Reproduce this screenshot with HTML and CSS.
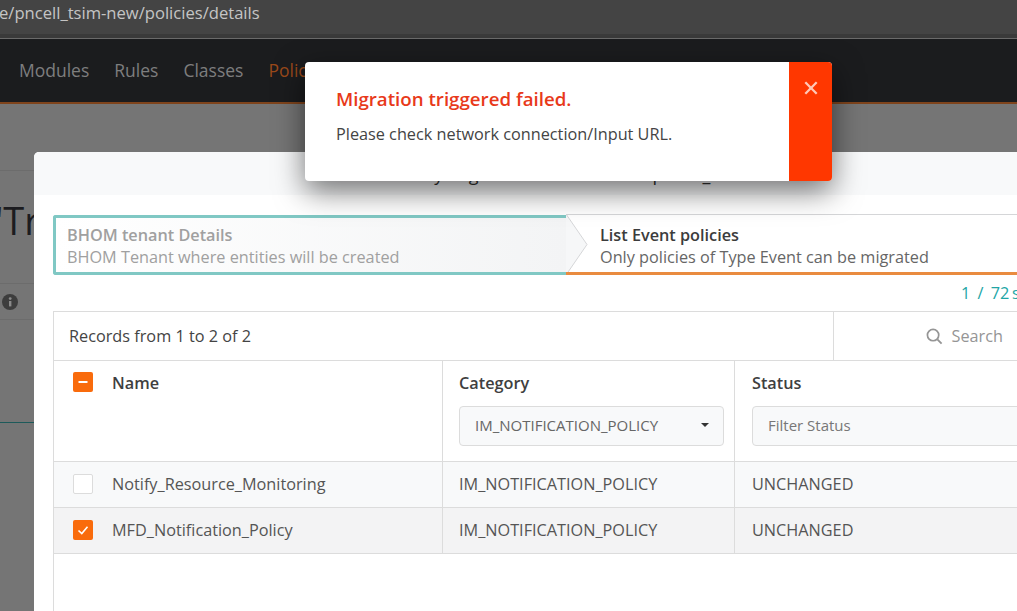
FILE: index.html
```html
<!DOCTYPE html>
<html lang="en">
<head>
    <meta charset="UTF-8">
    <title>Policy details</title>
    <link rel="stylesheet" href="styles.css">
</head>
<body>
    <!-- Browser address bar -->
    <div class="address-bar">
        <span class="address-text">e/pncell_tsim-new/policies/details</span>
    </div>

    <!-- Top navigation, dimmed by the modal backdrop -->
    <nav class="top-nav">
        <a class="nav-link">Modules</a>
        <a class="nav-link">Rules</a>
        <a class="nav-link">Classes</a>
        <a class="nav-link active">Policies</a>
    </nav>

    <!-- Page behind the modal -->
    <main class="page">
        <div class="page-title">'Tr</div>
        <div class="page-info">
            <svg class="info-icon" viewBox="0 0 16 16">
                <circle cx="8" cy="8" r="8" fill="#3d3d3d"/>
                <rect x="7" y="7" width="2.4" height="5.4" fill="#8a8a8a"/>
                <circle cx="8.2" cy="4.6" r="1.4" fill="#8a8a8a"/>
            </svg>
        </div>
        <div class="page-rule"></div>
    </main>

    <!-- Migration modal -->
    <section class="modal">
        <header class="modal-header">Policy Migrations to BHOM for pncell_tsim</header>
        <div class="modal-body">
            <div class="steps">
                <div class="step step-done">
                    <div class="step-title">BHOM tenant Details</div>
                    <div class="step-text">BHOM Tenant where entities will be created</div>
                    <svg class="step-arrow" viewBox="0 0 22 61">
                        <polygon points="0,0 21,30.5 0,61" fill="#f6f7f8"/>
                        <polyline points="0,0 21,30.5 0,61" fill="none" stroke="#d5d6d8"/>
                    </svg>
                </div>
                <div class="step step-current">
                    <div class="step-title">List Event policies</div>
                    <div class="step-text">Only policies of Type Event can be migrated</div>
                </div>
            </div>

            <div class="pager">1 / 72&thinsp;s</div>

            <div class="grid">
                <div class="grid-toolbar">
                    <div class="records">Records from 1 to 2 of 2</div>
                    <div class="search">
                        <svg class="search-icon" viewBox="0 0 18 18">
                            <circle cx="7.5" cy="7.5" r="6" fill="none" stroke="#959595" stroke-width="1.8"/>
                            <line x1="12" y1="12" x2="16.5" y2="16.5" stroke="#959595" stroke-width="2"/>
                        </svg>
                        <span>Search</span>
                    </div>
                </div>

                <div class="grid-row grid-head">
                    <div class="cell cell-name">
                        <span class="check check-on">
                            <svg viewBox="0 0 20 20"><line x1="5.5" y1="10" x2="14.5" y2="10" stroke="#fff" stroke-width="2"/></svg>
                        </span>
                        <span class="head-label">Name</span>
                    </div>
                    <div class="cell cell-category">
                        <span class="head-label">Category</span>
                        <div class="filter filter-select">
                            <span>IM_NOTIFICATION_POLICY</span>
                            <span class="caret"></span>
                        </div>
                    </div>
                    <div class="cell cell-status">
                        <span class="head-label">Status</span>
                        <div class="filter filter-wide">Filter Status</div>
                    </div>
                </div>

                <div class="grid-row row-plain">
                    <div class="cell cell-name">
                        <span class="check"></span>
                        <span>Notify_Resource_Monitoring</span>
                    </div>
                    <div class="cell cell-category">IM_NOTIFICATION_POLICY</div>
                    <div class="cell cell-status">UNCHANGED</div>
                </div>

                <div class="grid-row row-selected">
                    <div class="cell cell-name">
                        <span class="check check-on">
                            <svg viewBox="0 0 20 20"><polyline points="5.5,10.5 8.8,13.6 14.5,6.8" fill="none" stroke="#fff" stroke-width="1.6"/></svg>
                        </span>
                        <span>MFD_Notification_Policy</span>
                    </div>
                    <div class="cell cell-category">IM_NOTIFICATION_POLICY</div>
                    <div class="cell cell-status">UNCHANGED</div>
                </div>
            </div>
        </div>
    </section>

    <!-- Error toast -->
    <div class="toast">
        <div class="toast-body">
            <div class="toast-title">Migration triggered failed.</div>
            <div class="toast-text">Please check network connection/Input URL.</div>
        </div>
        <div class="toast-close">
            <svg viewBox="0 0 16 16">
                <line x1="1.5" y1="1.5" x2="14.5" y2="14.5" stroke="#ffc9b8" stroke-width="2.6"/>
                <line x1="14.5" y1="1.5" x2="1.5" y2="14.5" stroke="#ffc9b8" stroke-width="2.6"/>
            </svg>
        </div>
    </div>
</body>
</html>
```

FILE: styles.css
```css
/* Page layout */
html, body {
    height: 100%;
}

body {
    margin: 0;
    overflow: hidden;
    font-family: "Open Sans", Arial, sans-serif;
    font-size: 16.25px;
    color: #444;
    background-color: #757575;
}

/* Browser address bar */
.address-bar {
    height: 34px;
    background-color: #444;
    border-bottom: 4px solid #3a3a3a;
    overflow: hidden;
}

.address-text {
    font-size: 16.6px;
    line-height: 26px;
    color: #c4c4c4;
    margin-left: -1px;
}

/* Top navigation */
.top-nav {
    height: 62px;
    padding-bottom: 1px;
    border-top: 1px solid #6a6a6a;
    border-bottom: 2px solid #7f441c;
    background-color: #1b1c1e;
    display: flex;
    align-items: center;
    gap: 25px;
    padding-left: 19px;
}

.nav-link {
    font-size: 17.5px;
    color: #7e7e7e;
}

.nav-link.active {
    color: #99491a;
}

/* Page behind the modal */
.page {
    margin-top: 66px;
    border-top: 1px solid #6c6c6c;
    width: 34px;
    overflow: hidden;
}

.page-title {
    height: 112px;
    font-size: 38px;
    line-height: 98px;
    color: #1c1c20;
    white-space: nowrap;
    margin-left: -5px;
}

.page-info {
    height: 35px;
    border-top: 1px solid #6c6c6c;
    border-bottom: 1px solid #6c6c6c;
    display: flex;
    align-items: center;
    padding-left: 2px;
}

.info-icon {
    width: 16px;
    height: 16px;
}

.page-rule {
    margin-top: 102px;
    height: 1px;
    background-color: #1d5a5a;
}

/* Migration modal */
.modal {
    position: absolute;
    left: 34px;
    top: 152px;
    right: 0;
    bottom: 0;
    overflow: hidden;
    background-color: #fff;
    border-top-left-radius: 5px;
}

.modal-header {
    height: 43px;
    line-height: 44px;
    padding-left: 361px;
    font-size: 18px;
    background-color: #f8f9fa;
    color: #333;
    white-space: nowrap;
    overflow: hidden;
}

.modal-body {
    padding: 19px 0 0 19px;
}

/* Wizard steps */
.steps {
    display: flex;
    height: 61px;
}

.step {
    position: relative;
    box-sizing: border-box;
    padding-top: 9px;
    line-height: 22px;
}

.step-title {
    font-weight: 600;
}

.step-done {
    width: 513px;
    margin-top: 1px;
    padding-left: 11px;
    border: 3px solid #80c8c4;
    border-right: none;
    border-radius: 3px 0 0 3px;
    padding-top: 6px;
    background: linear-gradient(to right, #fff, #f3f4f5);
    color: #a0a0a0;
}

.step-arrow {
    position: absolute;
    left: 510px;
    top: -4px;
    width: 22px;
    height: 61px;
}

.step-current {
    flex: 1;
    padding-left: 34px;
    border-top: 1px solid #d5d6d8;
    border-bottom: 3px solid #e98b3f;
    color: #666;
}

.step-current .step-title {
    color: #3c3c3c;
}

/* Selection counter */
.pager {
    height: 36px;
    line-height: 36px;
    color: #21a5a5;
    white-space: nowrap;
    padding-left: 908px;
    word-spacing: 3px;
    overflow: hidden;
}

/* Policies grid */
.grid {
    height: 320px;
    border: 1px solid #dcdcdc;
    border-right: none;
}

.grid-toolbar {
    display: flex;
    height: 48px;
    border-bottom: 1px solid #dcdcdc;
}

.records {
    width: 764px;
    padding-left: 15px;
    line-height: 48px;
    border-right: 1px solid #dcdcdc;
}

.search {
    flex: 1;
    display: flex;
    align-items: center;
    justify-content: flex-end;
    gap: 9px;
    padding-right: 14px;
    color: #959595;
}

.search-icon {
    width: 17px;
    height: 17px;
}

.grid-row {
    display: flex;
    border-bottom: 1px solid #dcdcdc;
}

.row-plain {
    background-color: #f8f9fa;
}

.row-selected {
    background-color: #f3f3f4;
}

.cell {
    box-sizing: border-box;
    height: 45px;
    padding-bottom: 2px;
    display: flex;
    align-items: center;
    border-right: 1px solid #dcdcdc;
    padding-left: 17px;
    color: #555;
}

.grid-head .cell {
    height: 100px;
    align-items: flex-start;
}

.cell-name {
    flex: none;
    width: 389px;
    padding-left: 19px;
    gap: 19px;
}

.cell-category {
    flex: none;
    width: 292px;
    padding-left: 16px;
}

.cell-status {
    flex: 1;
    border-right: none;
}

.grid-head .cell-name {
    padding-top: 11px;
}

.grid-head .cell-category,
.grid-head .cell-status {
    flex-direction: column;
    padding-top: 11px;
    gap: 12px;
}

.head-label {
    font-weight: 600;
    color: #3f3f3f;
    line-height: 22px;
}

/* Checkboxes */
.check {
    box-sizing: border-box;
    width: 20px;
    height: 20px;
    flex: none;
    background-color: #fff;
    border: 1px solid #dcdcdc;
    border-radius: 2px;
    display: block;
}

.check svg {
    display: block;
    width: 20px;
    height: 20px;
}

.check-on {
    background-color: #f96b0c;
    border: none;
}

/* Column filters */
.filter {
    box-sizing: border-box;
    height: 40px;
    width: 265px;
    padding: 0 15px 2px;
    display: flex;
    align-items: center;
    justify-content: space-between;
    font-size: 15px;
    color: #777;
    background-color: #f8f9fa;
    border: 1px solid #dcdcdc;
    border-radius: 4px;
}

.filter-select {
    color: #666;
}

.filter-wide {
    width: 300px;
}

.caret {
    width: 0;
    height: 0;
    border-left: 4px solid transparent;
    border-right: 4px solid transparent;
    border-top: 4px solid #333;
    margin-right: -1px;
}

/* Error toast */
.toast {
    position: absolute;
    left: 305px;
    top: 62px;
    width: 527px;
    height: 119px;
    display: flex;
    border-radius: 4px;
    overflow: hidden;
    background-color: #fff;
    box-shadow: 0 10px 30px rgba(0, 0, 0, 0.55);
}

.toast-body {
    flex: 1;
    padding: 24px 0 0 31px;
}

.toast-title {
    font-size: 18.7px;
    font-weight: 600;
    color: #e8391a;
    line-height: 26px;
}

.toast-text {
    margin-top: 11px;
    line-height: 22px;
    color: #444;
}

.toast-close {
    width: 43px;
    background-color: #ff3700;
    display: flex;
    justify-content: center;
    padding-top: 19px;
    box-sizing: border-box;
}

.toast-close svg {
    width: 14px;
    height: 14px;
}
```
